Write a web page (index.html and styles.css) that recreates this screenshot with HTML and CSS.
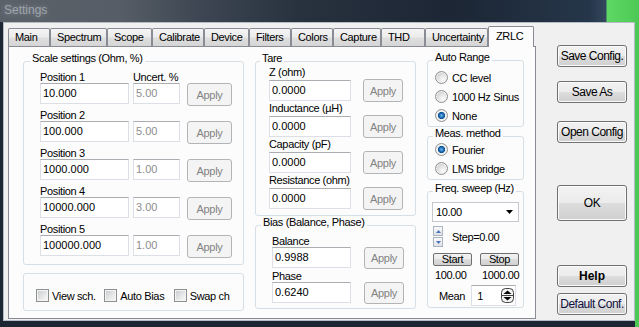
FILE: index.html
```html
<!DOCTYPE html>
<html lang="en">
<head>
    <meta charset="UTF-8">
    <meta name="viewport" content="width=device-width, initial-scale=1.0">
    <title>Settings</title>
    <link rel="stylesheet" href="styles.css">
</head>
<body>

    <div class="titlebar"><span class="title">Settings</span></div>

    <div class="client">
        <div class="tabctl">
            <div class="tabs">
                <div class="tab t-main">Main</div>
                <div class="tab t-spectrum">Spectrum</div>
                <div class="tab t-scope">Scope</div>
                <div class="tab t-calibrate">Calibrate</div>
                <div class="tab t-device">Device</div>
                <div class="tab t-filters">Filters</div>
                <div class="tab t-colors">Colors</div>
                <div class="tab t-capture">Capture</div>
                <div class="tab t-thd">THD</div>
                <div class="tab t-uncert">Uncertainty</div>
                <div class="tab t-zrlc active">ZRLC</div>
            </div>

            <div class="page">
                <!-- left column: scale settings -->
                <div class="col col1">
                    <div class="group scale">
                        <div class="gtitle">Scale settings (Ohm, %)</div>
                        <div class="prow">
                            <div class="plabels"><span class="lbl pos">Position 1</span><span class="lbl">Uncert. %</span></div>
                            <div class="fields">
                                <div class="edit val">10.000</div>
                                <div class="edit unc off">5.00</div>
                                <div class="btn apply">Apply</div>
                            </div>
                        </div>
                        <div class="prow">
                            <div class="plabels"><span class="lbl pos">Position 2</span></div>
                            <div class="fields">
                                <div class="edit val">100.000</div>
                                <div class="edit unc off">5.00</div>
                                <div class="btn apply">Apply</div>
                            </div>
                        </div>
                        <div class="prow">
                            <div class="plabels"><span class="lbl pos">Position 3</span></div>
                            <div class="fields">
                                <div class="edit val">1000.000</div>
                                <div class="edit unc off">1.00</div>
                                <div class="btn apply">Apply</div>
                            </div>
                        </div>
                        <div class="prow">
                            <div class="plabels"><span class="lbl pos">Position 4</span></div>
                            <div class="fields">
                                <div class="edit val">10000.000</div>
                                <div class="edit unc off">3.00</div>
                                <div class="btn apply">Apply</div>
                            </div>
                        </div>
                        <div class="prow">
                            <div class="plabels"><span class="lbl pos">Position 5</span></div>
                            <div class="fields">
                                <div class="edit val">100000.000</div>
                                <div class="edit unc off">1.00</div>
                                <div class="btn apply">Apply</div>
                            </div>
                        </div>
                    </div>

                    <div class="group checks">
                        <div class="chk"><span class="cbox"></span>View sch.</div>
                        <div class="chk"><span class="cbox"></span>Auto Bias</div>
                        <div class="chk"><span class="cbox"></span>Swap ch</div>
                    </div>
                </div>

                <!-- middle column: tare and bias -->
                <div class="col col2">
                    <div class="group tare">
                        <div class="gtitle">Tare</div>
                        <div class="trow">
                            <div class="lbl">Z (ohm)</div>
                            <div class="fields"><div class="edit">0.0000</div><div class="btn apply">Apply</div></div>
                        </div>
                        <div class="trow">
                            <div class="lbl">Inductance (µH)</div>
                            <div class="fields"><div class="edit">0.0000</div><div class="btn apply">Apply</div></div>
                        </div>
                        <div class="trow">
                            <div class="lbl">Capacity (pF)</div>
                            <div class="fields"><div class="edit">0.0000</div><div class="btn apply">Apply</div></div>
                        </div>
                        <div class="trow">
                            <div class="lbl">Resistance (ohm)</div>
                            <div class="fields"><div class="edit">0.0000</div><div class="btn apply">Apply</div></div>
                        </div>
                    </div>

                    <div class="group bias">
                        <div class="gtitle">Bias (Balance, Phase)</div>
                        <div class="trow">
                            <div class="lbl">Balance</div>
                            <div class="fields"><div class="edit">0.9988</div><div class="btn apply">Apply</div></div>
                        </div>
                        <div class="trow">
                            <div class="lbl">Phase</div>
                            <div class="fields"><div class="edit">0.6240</div><div class="btn apply">Apply</div></div>
                        </div>
                    </div>
                </div>

                <!-- right column: options -->
                <div class="col col3">
                    <div class="group autorange">
                        <div class="gtitle">Auto Range</div>
                        <div class="opt"><span class="radio"></span>CC level</div>
                        <div class="opt"><span class="radio"></span>1000 Hz Sinus</div>
                        <div class="opt"><span class="radio on"></span>None</div>
                    </div>

                    <div class="group meas">
                        <div class="gtitle">Meas. method</div>
                        <div class="opt"><span class="radio on"></span>Fourier</div>
                        <div class="opt"><span class="radio"></span>LMS bridge</div>
                    </div>

                    <div class="group sweep">
                        <div class="gtitle">Freq. sweep (Hz)</div>
                        <div class="combo">
                            <span>10.00</span>
                            <svg width="7" height="4" viewBox="0 0 7 4"><path d="M0 0h7L3.5 4z" fill="#000"/></svg>
                        </div>
                        <div class="steprow">
                            <div class="spinv">
                                <div class="sb"><svg width="5" height="3" viewBox="0 0 5 3"><path d="M0 3h5L2.5 0z" fill="#4d74c0"/></svg></div>
                                <div class="sb"><svg width="5" height="3" viewBox="0 0 5 3"><path d="M0 0h5L2.5 3z" fill="#4d74c0"/></svg></div>
                            </div>
                            <span class="stept">Step=0.00</span>
                        </div>
                        <div class="sbtns">
                            <div class="small">Start</div>
                            <div class="small">Stop</div>
                        </div>
                        <div class="nums"><span>100.00</span><span>1000.00</span></div>
                        <div class="mean">
                            <span>Mean</span>
                            <div class="mbox">
                                <span>1</span>
                                <svg width="13" height="15" viewBox="0 0 13 15">
                                    <rect x="0.5" y="0.5" width="12" height="14" rx="4" fill="#f2f2f2" stroke="#404040"/>
                                    <line x1="1" y1="7.5" x2="12" y2="7.5" stroke="#404040"/>
                                    <path d="M2.5 6h8L6.5 2.5z" fill="#000"/>
                                    <path d="M2.5 9h8L6.5 12.5z" fill="#000"/>
                                </svg>
                            </div>
                        </div>
                    </div>
                </div>
            </div>
        </div>

        <div class="side">
            <div class="wbtn save">Save Config.</div>
            <div class="wbtn saveas">Save As</div>
            <div class="wbtn open">Open Config</div>
            <div class="wbtn ok">OK</div>
            <div class="wbtn help">Help</div>
            <div class="wbtn def">Default Conf.</div>
        </div>
    </div>

</body>
</html>
```

FILE: styles.css
```css
* {
    box-sizing: border-box;
}
body {
    margin: 0;
    width: 639px;
    height: 327px;
    overflow: hidden;
    font-family: "Liberation Sans", Arial, sans-serif;
    font-size: 11px;
    letter-spacing: -0.35px;
    color: #000;
    background: linear-gradient(90deg, #1d2734 0, #1d2734 635px, #4cc955 635px);
}

/* window title */
.titlebar {
    height: 22px;
    padding: 3px 0 0 4px;
    background: linear-gradient(90deg, #5b6169 0, #565d66 120px, #3d4652 200px, #28323f 300px, #1c2634 450px, #26364a 590px, #33485e 606px, #5fd866 607px, #4cc954 639px);
}
.title {
    font-size: 12px;
    letter-spacing: 0;
    color: #9ea5ad;
    text-shadow: 0 0 6px rgba(200, 210, 220, 0.45);
}

.client {
    display: flex;
    margin-left: 3px;
    width: 632px;
    height: 299px;
    padding: 3px 0 0 4px;
    background: #f0f0f0;
    border: 1px solid #b4bcc5;
}

/* tabs */
.tabctl {
    width: 528px;
}
.tabs {
    display: flex;
    align-items: flex-end;
    height: 20px;
}
.tab {
    height: 18px;
    line-height: 17px;
    padding-left: 6px;
    border: 1px solid #898c95;
    border-bottom: 0;
    border-radius: 2px 2px 0 0;
    background: linear-gradient(#f4f4f4, #ececec 45%, #dedede 55%, #d5d5d5);
    white-space: nowrap;
}
.t-main { width: 42px; }
.t-spectrum { width: 57px; }
.t-scope { width: 45px; }
.t-calibrate { width: 52px; }
.t-device { width: 45px; }
.t-filters { width: 42px; }
.t-colors { width: 42px; }
.t-capture { width: 48px; }
.t-thd { width: 44px; }
.t-uncert { width: 63px; }
.t-zrlc { width: 46px; }
.tab.active {
    height: 21px;
    margin-bottom: -1px;
    line-height: 18px;
    padding-left: 7px;
    background: #fcfcfc;
    z-index: 1;
}

.page {
    display: flex;
    height: 273px;
    padding: 13px 0 0 14px;
    border: 1px solid #898c95;
    background: #fcfcfc;
}
.col1 {
    width: 221px;
    padding-top: 1px;
}
.col2 {
    width: 161px;
    margin-left: 11px;
    padding-top: 1px;
}
.col3 {
    width: 97px;
    margin-left: 11px;
}

/* group boxes */
.group {
    border: 1px solid #d5dfe5;
    border-radius: 3px;
}
.gtitle {
    display: table;
    margin: -10px 0 0 5px;
    padding: 0 2px;
    line-height: 13px;
    background: #fcfcfc;
}
.lbl {
    line-height: 12px;
}

.edit {
    height: 21px;
    line-height: 19px;
    padding-left: 2px;
    border: 1px solid #dcdfe6;
    border-top-color: #abadb3;
    background: #fff;
    letter-spacing: 0;
}
.edit.off {
    color: #8d8d8d;
}
.btn.apply {
    display: flex;
    align-items: center;
    justify-content: center;
    height: 23px;
    border: 1px solid #b1b5b8;
    border-radius: 3px;
    background: #f4f4f4;
    color: #838383;
}
.fields {
    display: flex;
    align-items: flex-start;
    height: 23px;
}

/* scale settings */
.scale {
    padding: 0 0 6px 16px;
}
.scale .gtitle {
    margin-left: -10px;
    margin-bottom: 6px;
}
.plabels {
    display: flex;
    height: 12px;
}
.lbl.pos {
    width: 93px;
}
.prow {
    margin-bottom: 3px;
}
.prow:last-child {
    margin-bottom: 0;
}
.scale .val { width: 89px; }
.scale .unc { width: 47px; margin-left: 4px; }
.scale .apply { width: 45px; margin-left: 7px; }

.checks {
    display: flex;
    height: 38px;
    margin-top: 8px;
    padding: 15px 0 0 12px;
}
.chk {
    display: flex;
    align-items: center;
    width: 70px;
    height: 13px;
    white-space: nowrap;
}
.chk:first-child {
    width: 69px;
}
.cbox {
    width: 13px;
    height: 13px;
    margin-right: 3px;
    border: 1px solid #8e8f8f;
    background: linear-gradient(135deg, #c6cacf, #eeeeee 70%, #f8f8f8);
    box-shadow: inset 0 0 0 1px #f4f4f4;
}

/* tare and bias */
.tare {
    padding: 0 0 5px 13px;
}
.tare .gtitle {
    margin-left: -9px;
    margin-bottom: 1px;
}
.tare .lbl {
    line-height: 13px;
}
.tare .edit {
    width: 82px;
    margin-top: 1px;
}
.tare .apply {
    width: 40px;
    margin-left: 12px;
}
.bias {
    margin-top: 9px;
    padding: 0 0 3px 16px;
}
.bias .gtitle {
    margin-left: -11px;
    margin-bottom: 6px;
}
.bias .edit {
    width: 79px;
}
.bias .apply {
    width: 40px;
    height: 22px;
    margin-left: 13px;
}

/* options */
.opt {
    display: flex;
    align-items: center;
    height: 19px;
    padding-left: 7px;
    white-space: nowrap;
}
.radio {
    width: 13px;
    height: 13px;
    margin-right: 4px;
    border: 1px solid #8f9091;
    border-radius: 50%;
    background: radial-gradient(circle at 65% 70%, #fbfbfb 0, #e6e6e6 40%, #c8c8c8 80%);
    box-shadow: inset 0 0 0 1px #f2f2f2;
}
.radio.on {
    background: radial-gradient(circle, #6fbcf0 0, #2a78c0 1.8px, #0d4f8f 3.3px, #f3f3f3 3.9px, #e0e0e0 100%);
}
.autorange {
    padding-bottom: 1px;
}
.autorange .gtitle {
    margin-bottom: 4px;
}
.meas {
    margin-top: 9px;
    padding-bottom: 1px;
}
.sweep {
    margin-top: 11px;
    padding-bottom: 1px;
}
.sweep .gtitle {
    margin-bottom: 7px;
}
.combo {
    display: flex;
    align-items: center;
    justify-content: space-between;
    height: 20px;
    margin: 0 4px;
    padding: 0 5px 0 3px;
    border: 1px solid #c5c8ce;
    background: #fff;
}
.steprow {
    display: flex;
    align-items: center;
    height: 21px;
    margin-top: 4px;
    padding-left: 5px;
}
.spinv {
    display: flex;
    flex-direction: column;
    gap: 1px;
}
.sb {
    display: flex;
    align-items: center;
    justify-content: center;
    width: 10px;
    height: 10px;
    border: 1px solid #aab4c2;
    background: linear-gradient(#fafafa, #e2e2e2);
}
.stept {
    margin-left: 9px;
}
.sbtns {
    display: flex;
    gap: 8px;
    margin-top: 6px;
    padding-left: 5px;
}
.small {
    width: 39px;
    height: 13px;
    line-height: 11px;
    text-align: center;
    border: 1px solid #707070;
    border-radius: 2px;
    background: linear-gradient(#f2f2f2, #ebebeb 50%, #dddddd 50%, #cfcfcf);
}
.nums {
    display: flex;
    height: 14px;
    margin-top: 2px;
    padding-left: 7px;
    line-height: 14px;
}
.nums span:first-child {
    width: 47px;
}
.mean {
    display: flex;
    align-items: center;
    height: 21px;
    margin-top: 3px;
    padding-left: 11px;
}
.mbox {
    display: flex;
    align-items: center;
    justify-content: space-between;
    width: 45px;
    height: 21px;
    margin-left: 6px;
    padding: 0 1px 0 5px;
    border: 1px solid #dcdfe6;
    border-top-color: #abadb3;
    background: #fff;
}

/* dialog buttons */
.side {
    display: flex;
    flex-direction: column;
    width: 70px;
    margin-left: 21px;
    padding-top: 19px;
}
.wbtn {
    display: flex;
    align-items: center;
    justify-content: center;
    height: 22px;
    border: 1px solid #707070;
    border-radius: 3px;
    background: linear-gradient(#f2f2f2, #ebebeb 50%, #dddddd 50%, #cfcfcf);
    box-shadow: inset 0 0 0 1px #fbfbfb;
    font-size: 12px;
    letter-spacing: -0.5px;
    white-space: nowrap;
}
.saveas { margin-top: 14px; }
.open { margin-top: 18px; }
.ok { margin-top: 42px; height: 36px; }
.help { margin-top: 44px; font-weight: bold; letter-spacing: 0; }
.def { margin-top: 6px; color: #101040; }
```
